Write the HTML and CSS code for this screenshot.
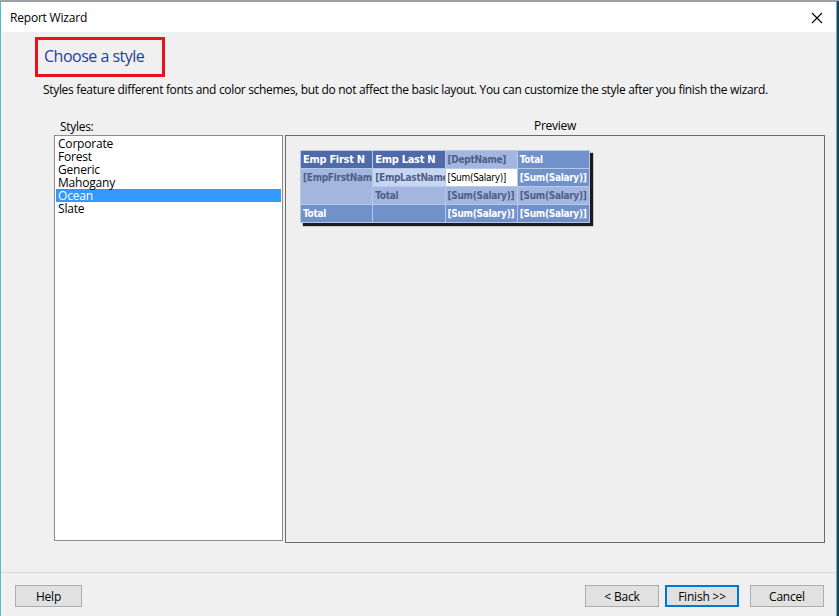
FILE: index.html
```html
<!DOCTYPE html>
<html>
<head>
<meta charset="utf-8">
<link rel="stylesheet" href="styles.css">
</head>
<body>
<div class="desk"></div>
<div class="window">
  <div class="titlebar">
    <span class="title">Report Wizard</span>
    <svg class="close" width="12" height="12" viewBox="0 0 12 12"><path d="M1 1 L11 11 M11 1 L1 11" stroke="#000" stroke-width="1.1" fill="none"/></svg>
  </div>
  <div class="content">
    <div class="heading"><span>Choose a style</span></div>
    <p class="desc">Styles feature different fonts and color schemes, but do not affect the basic layout. You can customize the style after you finish the wizard.</p>
    <div class="main">
      <div class="leftcol">
        <div class="lbl lbl-styles">Styles:</div>
        <ul class="list">
          <li>Corporate</li>
          <li>Forest</li>
          <li>Generic</li>
          <li>Mahogany</li>
          <li class="sel">Ocean</li>
          <li>Slate</li>
        </ul>
      </div>
      <div class="rightcol">
        <div class="lbl lbl-preview">Preview</div>
        <div class="preview">
          <table class="tbl">
            <tr>
              <td class="c-dark hdr">Emp First N</td>
              <td class="c-dark hdr">Emp Last N</td>
              <td class="c-light dim">[DeptName]</td>
              <td class="c-mid wt">Total</td>
            </tr>
            <tr>
              <td class="c-light dim top" rowspan="2">[EmpFirstName]</td>
              <td class="c-pale dim">[EmpLastName]</td>
              <td class="c-white norm">[Sum(Salary)]</td>
              <td class="c-mid wt">[Sum(Salary)]</td>
            </tr>
            <tr>
              <td class="c-light dim">Total</td>
              <td class="c-light dim">[Sum(Salary)]</td>
              <td class="c-light dim">[Sum(Salary)]</td>
            </tr>
            <tr>
              <td class="c-mid wt">Total</td>
              <td class="c-mid wt"></td>
              <td class="c-mid wt">[Sum(Salary)]</td>
              <td class="c-mid wt">[Sum(Salary)]</td>
            </tr>
          </table>
        </div>
      </div>
    </div>
    <div class="footer">
      <button class="btn help">Help</button>
      <div class="spacer"></div>
      <button class="btn">&lt; Back</button>
      <button class="btn primary">Finish &gt;&gt;</button>
      <button class="btn cancel">Cancel</button>
    </div>
  </div>
</div>
</body>
</html>
```
FILE: styles.css
```css
html, body {
  margin: 0;
  padding: 0;
}
body {
  background: #2f3d52;
  width: 839px;
  height: 616px;
  overflow: hidden;
  font-family: "Open Sans", "Noto Sans", sans-serif;
  font-size: 12px;
  color: #000;
}
.desk {
  height: 1px;
  background: #9aa3ad;
}
.window {
  width: 835px;
  height: 620px;
  border: 1px solid #58b7d4;
  background: #f0f0f0;
  display: flex;
  flex-direction: column;
}
.titlebar {
  height: 30px;
  background: #fff;
  display: flex;
  align-items: center;
  padding: 0 12px 0 9px;
  flex: none;
}
.title {
  font-size: 12px;
  letter-spacing: -0.2px;
  flex: 1;
}
.close {
  margin-top: 1px;
  margin-right: 1px;
}
.content {
  flex: 1;
  display: flex;
  flex-direction: column;
  background: #f0f0f0;
}
.heading {
  margin: 5px 0 0 34px;
  width: 118px;
  height: 34px;
  border: 3px solid #e8121f;
  display: flex;
  align-items: center;
  padding-left: 6px;
  box-sizing: content-box;
}
.heading span {
  font-size: 16px;
  color: #1f3fa0;
  letter-spacing: -0.5px;
  margin-top: -3px;
}
.desc {
  margin: 5px 0 0 42px;
  font-size: 12px;
  letter-spacing: -0.32px;
  line-height: 16px;
}
.main {
  display: flex;
  margin: 20px 0 0 53px;
  gap: 2px;
}
.leftcol {
  width: 229px;
  display: flex;
  flex-direction: column;
}
.rightcol {
  width: 540px;
  display: flex;
  flex-direction: column;
}
.lbl {
  height: 16px;
  line-height: 16px;
  font-size: 12px;
  letter-spacing: -0.3px;
}
.lbl-styles {
  padding-left: 6px;
  margin-top: 1px;
}
.lbl-preview {
  text-align: center;
  margin-bottom: 1px;
}
.list {
  list-style: none;
  margin: 0;
  padding: 1px 1px;
  border: 1px solid #8c8c8c;
  background: #fff;
  height: 402px;
}
.list li {
  height: 13px;
  line-height: 13px;
  padding-left: 2px;
  font-size: 12px;
  letter-spacing: -0.2px;
}
.list li.sel {
  background: #3399ff;
  color: #fff;
}
.preview {
  border: 1px solid #6a6a6a;
  background: #efefef;
  padding: 14px 0 0 14px;
  box-sizing: border-box;
  height: 408px;
}
.tbl {
  border-collapse: collapse;
  border: 1px solid #000;
  box-shadow: 3px 3px 1px #1a1a1a;
  table-layout: fixed;
  width: 290px;
  font-family: "DejaVu Sans Condensed", "DejaVu Sans", sans-serif;
  font-size: 10px;
}
.tbl td {
  height: 17px;
  padding: 0 2px;
  border: 1px solid #b9c8ea;
  white-space: nowrap;
  overflow: hidden;
  text-overflow: clip;
  letter-spacing: -0.3px;
}
.tbl td.top {
  vertical-align: top;
  padding-top: 3px;
}
.c-dark { background: #4f6aa8; }
.c-mid { background: #7191cb; }
.c-light { background: #a2b6e0; }
.c-pale { background: #c7d6f4; }
.c-white { background: #ffffff; }
.hdr { color: #fff; font-weight: bold; font-size: 11px; }
.wt { color: #fff; font-weight: bold; }
.dim { color: #4f5f85; font-weight: bold; }
.norm { color: #000; }
.footer {
  margin-top: 29px;
  border-top: 1px solid #dadada;
  display: flex;
  align-items: flex-start;
  padding: 12px 0 0 14px;
  gap: 6px;
}
.spacer { flex: 1; }
.btn {
  width: 74px;
  height: 22px;
  border: 1px solid #adadad;
  background: #e1e1e1;
  font-family: "Open Sans", "Noto Sans", sans-serif;
  font-size: 12px;
  letter-spacing: -0.2px;
  padding: 0;
  color: #000;
}
.btn.help { width: 67px; }
.btn.primary {
  border: 2px solid #0078d7;
}
.btn.cancel {
  margin-left: 5px;
  margin-right: 12px;
}
```
